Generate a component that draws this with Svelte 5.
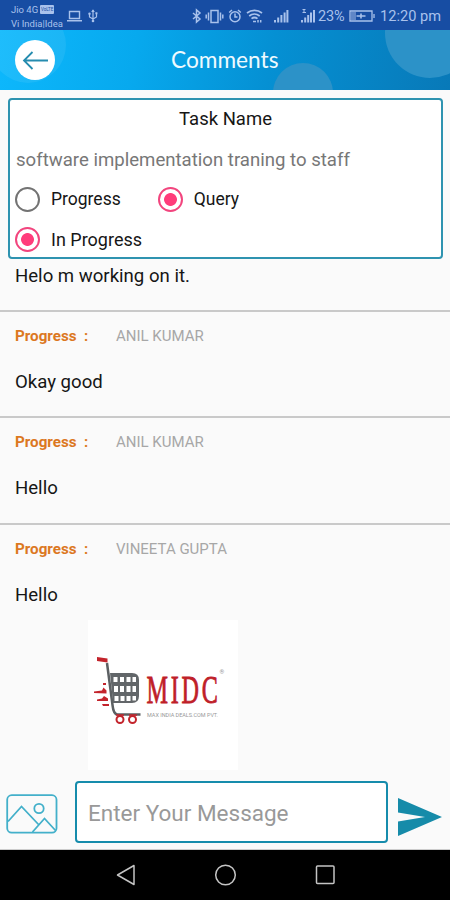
<script lang="ts">
	interface Comment {
		type: string;
		author: string;
		text: string;
		logo?: boolean;
	}

	const comments: Comment[] = [
		{ type: 'Progress', author: 'ANIL KUMAR', text: 'Okay good' },
		{ type: 'Progress', author: 'ANIL KUMAR', text: 'Hello' },
		{ type: 'Progress', author: 'VINEETA GUPTA', text: 'Hello', logo: true }
	];

	let status = $state('query');
	let inProgress = $state(true);
	let message = $state('');
</script>

{#snippet radio(label: string, checked: boolean, onclick: () => void)}
	<button class="radio" class:checked type="button" {onclick}>
		<span class="ring"></span>
		<span>{label}</span>
	</button>
{/snippet}

<div class="screen">
	<div class="status-bar">
		<div class="carriers">
			<div class="carrier">Jio 4G <span class="volte">VoLTE</span></div>
			<div class="carrier">Vi India|Idea</div>
		</div>
		<svg class="left-icons" viewBox="0 0 34 16" width="34" height="16" fill="none" stroke="currentColor">
			<path d="M3.5 3.5h10v7h-10zM1 12.7h15" stroke-width="1.4" />
			<path d="M27 2v11M23.5 6v3l3.5 2 3.5-2V5" stroke-width="1.2" />
			<path d="M25.2 4L27 1.3 28.8 4zM29.4 4.2h2v2h-2z" fill="currentColor" stroke="none" />
			<circle cx="23.5" cy="5.8" r="1.2" fill="currentColor" stroke="none" />
			<circle cx="27" cy="13" r="1.3" fill="currentColor" stroke="none" />
		</svg>
		<svg class="right-icons" viewBox="0 0 126 16" width="126" height="16" fill="none" stroke="currentColor" stroke-width="1.5">
			<path d="M2 5l7 6-3.5 3V2L9 5l-7 6" />
			<path d="M20 2.5h7v12h-7zM17.5 4.5v8M15.2 6.5v4M29.5 4.5v8M31.8 6.5v4" />
			<circle cx="44" cy="8.8" r="5" />
			<path d="M44 5.5v3.5h2.5M38.2 4.500l2.800-2.500M47 2l2.800 2.500" />
			<path d="M56 5c4.500-3.500 10.500-3.500 15 0M58.200 8c3-2.500 7.300-2.500 10.500 0M60.500 10.700c2-1.600 4-1.600 6 0" stroke-width="1.700" />
			<path d="M62 13.500h3M67 12v2.500M69.700 12v2.500" />
			<g fill="currentColor" stroke="none">
				<path d="M83 12h2v2.500h-2zM86.200 9.500h2v5h-2zM89.400 7h2v7.500h-2zM92.600 4.500h2v10h-2zM95.400 2h2v12.500h-2z" />
				<path d="M110 12h2v2.500h-2zM113.200 9.500h2v5h-2zM116.200 7h2v7.500h-2zM119 4.500h2v10h-2zM122 2h2v12.500h-2z" />
				<path d="M111.500 1h3v1h-1v2h1.500v1h-3.500v-1h1v-2h-1z" />
			</g>
		</svg>
		<span class="percent">23%</span>
		<svg class="battery" viewBox="0 0 26 14" width="26" height="14" fill="none" stroke="currentColor">
			<path d="M1 2h22v10H1zM25 5v4" stroke-width="1.300" />
			<path d="M2 3h5v8H2z" fill="currentColor" stroke="none" opacity=".5" />
			<path d="M7.500 7h9M12 4.500v5" stroke-width="1.600" />
		</svg>
		<span class="clock">12:20 pm</span>
	</div>

	<header>
		<svg class="bubbles" viewBox="0 0 450 60" width="450" height="60">
			<circle cx="28" cy="15" r="38" fill="#fff" opacity=".07" />
			<circle cx="303" cy="63" r="30" />
			<circle cx="430" cy="3" r="45" />
		</svg>
		<button class="back" type="button" aria-label="Back">
			<svg viewBox="0 0 40 40" width="40" height="40" fill="none" stroke="#258caf" stroke-width="1.800">
				<path d="M33 20.500H9M17.500 12L9 20.500l8.500 8.500" />
			</svg>
		</button>
		<h1>Comments</h1>
	</header>

	<main>
		<section class="task-card">
			<h2>Task Name</h2>
			<p class="task-text">software implementation traning to staff</p>
			<div class="radios type-radios">
				{@render radio('Progress', status === 'progress', () => (status = 'progress'))}
				{@render radio('Query', status === 'query', () => (status = 'query'))}
			</div>
			<div class="radios">
				{@render radio('In Progress', inProgress, () => (inProgress = !inProgress))}
			</div>
		</section>

		<p class="first-comment">Helo m working on it.</p>

		{#each comments as comment}
			<article class="comment">
				<div class="meta">
					<span class="type">{comment.type}</span>
					<span class="colon">:</span>
					<span class="author">{comment.author}</span>
				</div>
				<p class="text">{comment.text}</p>
				{#if comment.logo}
					<svg class="attachment" viewBox="0 0 150 150" width="150" height="150">
						<rect width="150" height="150" fill="#fff" />
						<path d="M19 43l5.500 42q1 9.500 5 9.500h23" fill="none" stroke="#5c6063" stroke-width="2.500" />
						<path d="M22 53h22q7 0 7 7v16q0 7-7 7H25z" fill="#626669" />
						<path d="M25.500 57h4v5h-4zM32 57h4v5h-4zM38.500 57h4v5h-4zM44.500 57h3.500v5h-3.500zM26 66h4v6h-4zM32 66h4v6h-4zM38.500 66h4v6h-4zM44.500 66h3.500v6h-3.500zM26.500 76h4v5h-4zM32.500 76h4v5h-4zM38.500 76h4v5h-4zM44.500 76h3.500v4.500h-3.500z" fill="#fff" />
						<g fill="#c3242c">
							<path d="M9 37l10.500 1.500v4L9 41zM15 63h3v2h-3zM6 71.500l8-1 1.500-3 3 3v3l-12.500-.500zM9 79.500l5-1 2-2.500 4 2.500v2.500H9zM14 84h7v2h-6z" />
						</g>
						<g fill="#fff" stroke="#c3242c" stroke-width="2">
							<circle cx="32" cy="99.500" r="3.500" />
							<circle cx="44.500" cy="99.500" r="3.500" />
						</g>
						<path d="M28 95h8M41 95h8" stroke="#c3242c" stroke-width="1.500" />
						<g transform="translate(58.500 83) scale(.62 1)">
							<text class="brand">MIDC</text>
						</g>
						<text class="reg" x="131.500" y="54">®</text>
						<text class="tagline" x="59" y="97" textLength="71" lengthAdjust="spacingAndGlyphs">MAX INDIA DEALS.COM PVT.</text>
					</svg>
				{/if}
			</article>
		{/each}
	</main>

	<footer class="composer">
		<svg class="picture" viewBox="0 0 52 40" width="52" height="40" fill="none" stroke="#43b0ca" stroke-width="1.800">
			<rect x="1.200" y="1.200" width="49.300" height="37.500" rx="4.500" />
			<path d="M2 27.500L15.500 12.500 33 31M26.500 38L38.500 24.500l11 12" />
			<circle cx="33" cy="14.500" r="4.700" />
		</svg>
		<input type="text" placeholder="Enter Your Message" bind:value={message} />
		<button class="send" type="button" aria-label="Send">
			<svg viewBox="0 0 44 38" width="44" height="38">
				<path d="M0 0l44 19L0 38V23.500L27 19 0 14.500z" fill="#168ba9" />
			</svg>
		</button>
	</footer>

	<nav>
		<svg viewBox="0 0 220 30" width="220" height="30" fill="none" stroke="#c4c4c4" stroke-width="1.500" stroke-linejoin="round">
			<path d="M19 5.500v19L2.500 15z" />
			<circle cx="110.500" cy="15" r="9.800" />
			<rect x="201.500" y="6" width="17.500" height="17.500" rx="1" />
		</svg>
	</nav>
</div>

<style>
	:global(body) {
		margin: 0;
	}

	.screen {
		width: 450px;
		height: 900px;
		display: flex;
		flex-direction: column;
		overflow: hidden;
		background: #fafafa;
		color: #161616;
		font-family: Roboto, "Liberation Sans", sans-serif;
	}

	button {
		border: 0;
		padding: 0;
		background: none;
		font: inherit;
		color: inherit;
	}

	h1,
	h2,
	p {
		margin: 0;
		font-weight: 400;
	}

	.status-bar {
		height: 30px;
		flex: none;
		display: flex;
		align-items: center;
		box-sizing: border-box;
		padding: 2px 0 0 11px;
		background: #174da3;
		color: #a9c2ec;
		white-space: nowrap;
	}

	.carriers {
		width: 55px;
	}

	.carrier {
		display: flex;
		align-items: center;
		gap: 2px;
		height: 14px;
		font-size: 9.5px;
	}

	.volte {
		width: 14px;
		height: 9px;
		border-radius: 1px;
		background: #a9c2ec;
		color: #174da3;
		font-size: 4.5px;
		line-height: 9px;
		text-align: center;
	}

	.right-icons {
		margin-left: 91px;
	}

	.percent {
		width: 28px;
		margin-left: 1px;
		font-size: 14.5px;
		letter-spacing: -0.2px;
	}

	.battery {
		margin-left: 3px;
	}

	.clock {
		margin-left: 5px;
		font-size: 14.6px;
	}

	header {
		position: relative;
		height: 60px;
		flex: none;
		display: flex;
		align-items: center;
		background: linear-gradient(100deg, #0db8fc 0%, #07a9ee 30%, #0590d3 60%, #0879b8 100%);
	}

	.bubbles {
		position: absolute;
		inset: 0;
		fill: #2c92c8;
	}

	.back {
		position: relative;
		width: 40px;
		height: 40px;
		margin-left: 15px;
		border-radius: 50%;
		background: #fff;
	}

	h1 {
		position: relative;
		margin-left: 116px;
		color: #eefaff;
		font: 22.7px/30px Lato, sans-serif;
	}

	main {
		flex: 1;
		min-height: 0;
		overflow: hidden;
	}

	.task-card {
		height: 161px;
		margin: 8px 7px 0 8px;
		box-sizing: border-box;
		padding: 7px 5px 0;
		border: 2px solid #2e93b0;
		border-radius: 4px;
		background: #fff;
	}

	h2 {
		font-size: 18.5px;
		line-height: 24px;
		text-align: center;
	}

	.task-text {
		margin-top: 17px;
		padding-left: 1px;
		color: #777;
		font-size: 18.6px;
		line-height: 24px;
	}

	.radios {
		display: flex;
		height: 40px;
		align-items: center;
		font-size: 18px;
	}

	.type-radios {
		margin-top: 7px;
		font-size: 17.5px;
	}

	.radio {
		display: flex;
		align-items: center;
		gap: 11px;
	}

	.radio + .radio {
		margin-left: 37px;
	}

	.ring {
		width: 25px;
		height: 25px;
		box-sizing: border-box;
		border: 2px solid #737373;
		border-radius: 50%;
	}

	.checked .ring {
		border-color: #f2457e;
		background: radial-gradient(circle, #ff3c7b 6px, transparent 6.8px);
	}

	.first-comment {
		height: 51px;
		padding-left: 15px;
		font-size: 18.6px;
		line-height: 34px;
	}

	.comment {
		height: 106.3px;
		box-sizing: border-box;
		padding: 14px 15px 0;
		border-top: 2px solid #c9c9c9;
	}

	.meta {
		display: flex;
		height: 20px;
		align-items: center;
		font-size: 15px;
	}

	.type,
	.colon {
		color: #dc781f;
		font-weight: 700;
	}

	.type {
		width: 69px;
		font-size: 15.2px;
	}

	.colon {
		width: 32px;
	}

	.author {
		color: #a7a7a7;
	}

	.text {
		margin-top: 23px;
		font-size: 18.6px;
		line-height: 26px;
	}

	.attachment {
		display: block;
		margin: 12px 0 0 73px;
	}

	.brand {
		fill: #bf2028;
		font: 39px "Liberation Serif", serif;
		letter-spacing: 4.5px;
		stroke: #bf2028;
		stroke-width: 0.8px;
	}

	.reg {
		fill: #999;
		font-size: 6px;
	}

	.tagline {
		fill: #999;
		font-size: 5px;
	}

	.composer {
		height: 70px;
		flex: none;
		display: flex;
		align-items: flex-start;
		box-sizing: border-box;
		padding-left: 6px;
		border-bottom: 1px solid #ccc;
	}

	.picture {
		margin-top: 14px;
	}

	input {
		width: 313px;
		height: 62px;
		margin: 1px 0 0 17px;
		box-sizing: border-box;
		padding: 2px 11px 0;
		border: 2px solid #168cac;
		border-radius: 4px;
		background: #fff;
		font: 22.5px Roboto, sans-serif;
	}

	input::placeholder {
		color: #999;
		opacity: 1;
	}

	.send {
		margin: 18px 0 0 10px;
	}

	.send svg {
		display: block;
	}

	nav {
		height: 50px;
		flex: none;
		display: flex;
		align-items: center;
		justify-content: center;
		background: #000;
	}
</style>
